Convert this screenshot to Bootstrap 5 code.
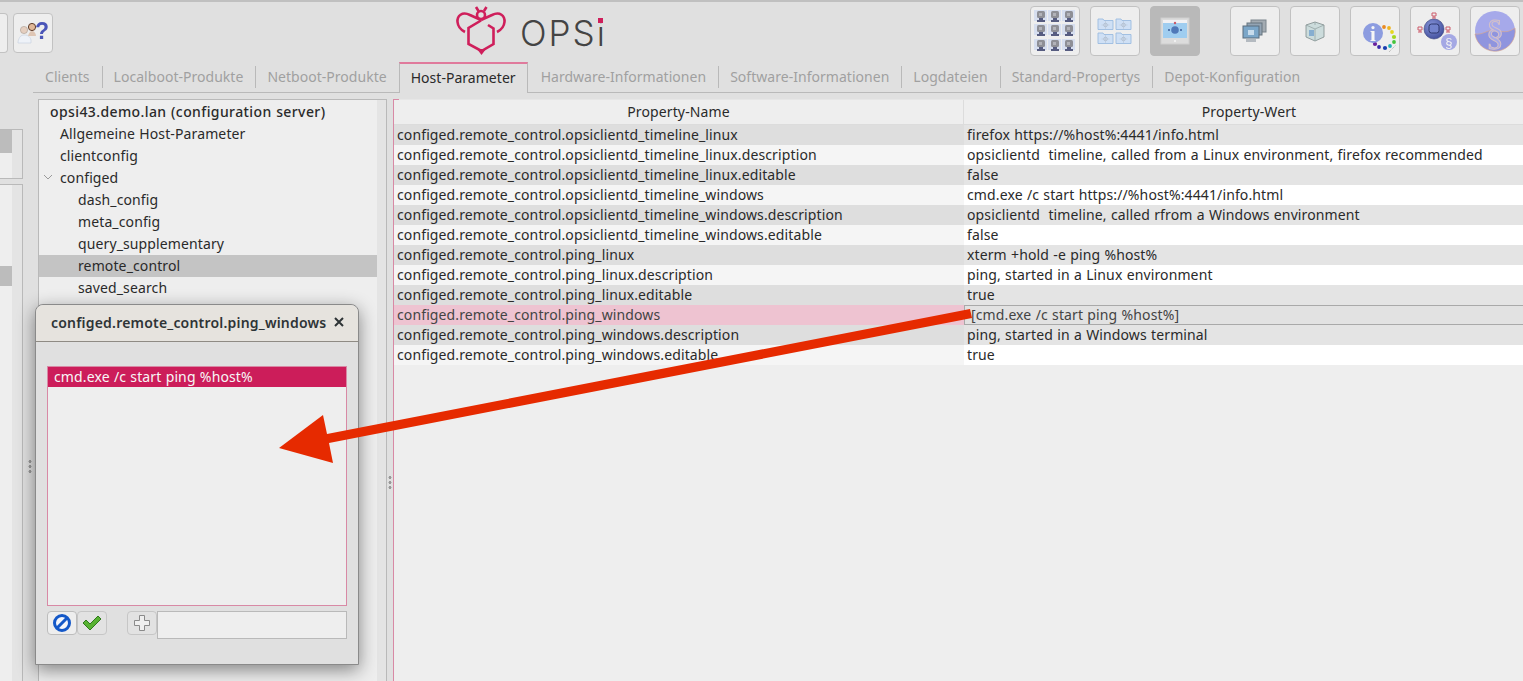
<!DOCTYPE html>
<html lang="de">

<head>
  <meta charset="UTF-8" />
  <title>opsi-configed Host-Parameter</title>
  <link href="https://cdn.jsdelivr.net/npm/bootstrap@5.3.5/dist/css/bootstrap.min.css" rel="stylesheet">
  <style>
    html, body {
      height: 100%;
      overflow: hidden;
    }

    body {
      margin: 0;
      background: #e0e0e0;
      font-family: "Noto Sans", "Open Sans", sans-serif;
      font-size: 14px;
      line-height: 20px;
      letter-spacing: .12px;
      word-spacing: .5px;
      color: #2a2a2a;
    }

    .app-frame {
      position: relative;
      width: 1523px;
      height: 681px;
      border-top: 2px solid #c0c0c0;
      overflow: hidden;
    }

    /* Toolbar */
    .top-bar {
      height: 60px;
      padding-top: 7px;
      position: relative;
    }

    .tool-btn {
      width: 50px;
      height: 50px;
      flex: none;
      background: #eeeeee;
      border: 1px solid #c2c2c2;
      border-radius: 4px;
      display: flex;
      align-items: center;
      justify-content: center;
    }

    .tool-btn svg,
    .help-btn svg {
      filter: blur(.45px);
    }

    .tool-btn.on {
      background: #b9b9b9;
      border-color: #b9b9b9;
    }

    .help-btn {
      width: 40px;
      height: 40px;
      flex: none;
      background: #eeeeee;
      border: 1px solid #c2c2c2;
      border-radius: 4px;
      margin-top: 4px;
      display: flex;
      align-items: center;
      justify-content: center;
    }

    .stub-btn {
      width: 8px;
      height: 40px;
      margin-top: 4px;
      background: #eeeeee;
      border: 1px solid #c2c2c2;
      border-left: 0;
      border-radius: 0 4px 4px 0;
    }

    .left-tools {
      gap: 5px;
    }

    .right-tools {
      position: absolute;
      top: 4px;
      left: 1030px;
      gap: 10px;
    }

    .tool-gap {
      width: 10px;
    }

    .logo-box {
      position: absolute;
      left: 455px;
      top: 2px;
    }

    .logo-word {
      position: absolute;
      left: 65px;
      top: 9px;
      font-family: Inter, "Liberation Sans", sans-serif;
      font-weight: 300;
      font-size: 35px;
      line-height: 40px;
      letter-spacing: 2px;
      color: #444444;
    }

    .logo-word b {
      position: relative;
      font-weight: 300;
    }

    .logo-word b::after {
      content: "";
      position: absolute;
      left: 1.5px;
      top: 6px;
      width: 5px;
      height: 5px;
      background: #cf1f5b;
    }

    /* Tabs */
    .tab-row {
      margin-left: 33px;
      height: 31px;
      border-bottom: 1px solid #b9b9b9;
      display: flex;
      align-items: stretch;
      letter-spacing: .03px;
    }

    .tab-item {
      padding: 5px 12px 0;
      color: #a0a0a0;
      position: relative;
    }

    .tab-item + .tab-item::before {
      content: "";
      position: absolute;
      left: 0;
      top: 4px;
      height: 22px;
      width: 1px;
      background: #b9b9b9;
    }

    .tab-item.active-tab {
      color: #2a2a2a;
      background: #e0e0e0;
      border: 1px solid #b9b9b9;
      border-top: 2px solid #e07a9c;
      border-bottom: 0;
      margin-bottom: -1px;
      margin-right: 1px;
      padding: 4px 11px 0;
    }

    .tab-item.active-tab::before,
    .active-tab + .tab-item::before {
      display: none;
    }

    /* Panes */
    .pane-row {
      height: 590px;
      padding-top: 6px;
      position: relative;
    }

    .far-left {
      width: 38px;
      flex: none;
      position: relative;
    }

    .stub-panel {
      position: absolute;
      left: -1px;
      width: 24px;
      background: linear-gradient(to right, #eeeeee 12px, #e4e4e4 12px);
      border: 1px solid #b9b9b9;
    }

    .stub-one {
      top: 30px;
      height: 50px;
    }

    .stub-one i,
    .stub-two i {
      position: absolute;
      left: 0;
      display: block;
      width: 12px;
      background: #bcbcbc;
    }

    .stub-one i {
      top: 0;
      height: 23px;
    }

    .stub-two {
      top: 85px;
      height: 520px;
    }

    .stub-two i {
      top: 81px;
      height: 20px;
    }

    .tree-pane {
      width: 349px;
      flex: none;
      height: 600px;
      background: linear-gradient(to right, #eeeeee 338px, #e4e4e4 338px);
      border: 1px solid #b9b9b9;
      padding-top: 1px;
    }

    .tree-inner {
      margin-right: 9px;
    }

    .tree-row {
      height: 22px;
      line-height: 21px;
      white-space: nowrap;
    }

    .tree-row.sel {
      background: #c4c4c4;
    }

    .tree-root {
      font-weight: 500;
      letter-spacing: .4px;
    }

    .indent-0 { padding-left: 11px; }
    .indent-1 { padding-left: 21px; position: relative; }
    .indent-2 { padding-left: 39px; }

    .tree-chevron {
      position: absolute;
      left: 4px;
      top: 7px;
    }

    .splitter {
      width: 6px;
      flex: none;
      position: relative;
    }

    .grip {
      position: absolute;
      left: 1px;
      top: 376px;
      width: 4px;
      height: 15px;
      background-image: radial-gradient(circle, #999999 1.4px, transparent 1.6px);
      background-size: 4px 5px;
    }

    .grip.grip-left {
      left: 28px;
      top: 457px;
    }

    .table-pane {
      width: 1141px;
      flex: none;
      height: 600px;
      background: #eeeeee;
      border: 1px solid #b9b9b9;
      border-top: 1px solid #e6e6e6;
      border-left: 1px solid #d889a5;
      position: relative;
    }

    .table-pane::before {
      content: "";
      position: absolute;
      left: -1px;
      top: -1px;
      width: 6px;
      height: 1px;
      background: #d889a5;
    }

    .head-row {
      height: 25px;
      display: flex;
      border-bottom: 1px solid #dcdcdc;
      line-height: 24px;
      text-align: center;
    }

    .head-row div {
      width: 570px;
      flex: none;
    }

    .head-row div:first-child {
      border-right: 1px solid #dcdcdc;
    }

    .prop-name {
      width: 570px;
      flex: none;
      padding-left: 3px;
      white-space: nowrap;
    }

    .prop-val {
      flex: 1;
      padding-left: 3px;
      white-space: nowrap;
    }

    .data-row {
      height: 20px;
      display: flex;
      line-height: 20px;
      background: #ffffff;
    }

    .data-row .prop-name {
      background: #f5f5f5;
    }

    .data-row:nth-child(odd) {
      background: #e4e4e4;
    }

    .data-row:nth-child(odd) .prop-name {
      background: #dedede;
    }

    .data-row.marked .prop-name {
      background: #eec3d1;
      color: #444444;
    }

    .data-row.marked .prop-val {
      background: #e2e2e2;
      outline: 1px solid #a9a9a9;
      outline-offset: -1px;
      padding-left: 7px;
      color: #444444;
    }

    /* Dialog */
    .edit-dialog {
      position: absolute;
      left: 35px;
      top: 302px;
      width: 324px;
      height: 361px;
      background: #e0e0e0;
      border: 1px solid #8a8a8a;
      border-radius: 8px 8px 0 0;
      box-shadow: 0 5px 18px rgba(0, 0, 0, 0.45);
      z-index: 3;
      display: flex;
      flex-direction: column;
    }

    .dialog-title {
      height: 37px;
      flex: none;
      background: #e6e3de;
      border-bottom: 1px solid #8f8b84;
      border-radius: 8px 8px 0 0;
      padding: 8px 14px 0 15px;
      font-weight: 600;
      letter-spacing: .2px;
      color: #2e3436;
    }

    .dialog-body {
      padding: 24px 11px 0;
    }

    .value-list {
      height: 240px;
      background: #eeeeee;
      border: 1px solid #d889a5;
    }

    .value-sel {
      height: 20px;
      background: #cc1d5a;
      color: #f7f7f7;
      padding-left: 6px;
      line-height: 20px;
    }

    .dialog-tools {
      margin-top: 5px;
    }

    .mini-btn {
      width: 30px;
      height: 24px;
      flex: none;
      background: #e2e2e2;
      border: 1px solid #c6c6c6;
      border-radius: 4px;
      display: flex;
      align-items: center;
      justify-content: center;
    }

    .mini-btn.lit {
      background: #eeeeee;
      border-color: #bdbdbd;
    }

    .plus-gap {
      margin-left: 20px;
    }

    .value-input {
      width: 190px;
      height: 28px;
      background: #eeeeee;
      border: 1px solid #b9b9b9;
    }

    .red-arrow {
      position: absolute;
      left: 270px;
      top: 298px;
      z-index: 5;
    }
  </style>
</head>

<body>
  <div class="app-frame">

    <!-- Toolbar -->
    <div class="top-bar d-flex">
      <div class="d-flex left-tools">
        <div class="stub-btn"></div>
        <div class="help-btn">
          <svg width="32" height="30" viewBox="0 0 32 30">
            <circle cx="7" cy="12" r="3.6" fill="#e5cfc0" stroke="#a89a90" stroke-width=".6" />
            <path d="M1 24c1-5 3-7 6-7s6 1 7 5v3H1z" fill="#eef2f8" stroke="#c5cede" stroke-width=".6" />
            <circle cx="15" cy="9" r="3.6" fill="#e0b898" stroke="#5c3a28" stroke-width="1" />
            <path d="M11 18c1-3 2-5 4-5s4 2 4 5z" fill="#dfc6b4" />
            <text x="18" y="21" font-family="Liberation Sans, sans-serif" font-weight="700" font-size="23" fill="#4a55b8">?</text>
          </svg>
        </div>
      </div>

      <div class="logo-box">
        <svg width="54" height="54" viewBox="455 4 54 54">
          <g fill="none" stroke="#cf1f5b" stroke-width="2.6">
            <path d="M481 20 470 15C462 11 457 16 457.5 22 458 27 461 30 465 32" />
            <path d="M481 20 492 15C500 11 505 16 504.5 22 504 27 501 30 497 32" />
            <path d="M488 25 493.5 28.5V44L481.5 51 468.5 44V28L481 20.5" />
            <circle cx="481" cy="15" r="4" />
            <path d="M476 7 478.5 11M486.5 7 484 11" />
          </g>
          <path d="M477 49 481.5 55 486 49z" fill="#cf1f5b" />
        </svg>
        <div class="logo-word">OPS<b>i</b></div>
      </div>

      <div class="right-tools d-flex">
        <div class="tool-btn">
          <svg width="42" height="42" viewBox="0 0 42 42">
            <g id="srv">
              <rect x="0" y="0" width="13" height="11" fill="#d6deef" />
              <rect x="3" y="1" width="8" height="7" rx="1.5" fill="#8e8f96" />
              <rect x="5" y="3" width="3" height="3" fill="#b2b3ba" />
              <path d="M5 8h4v2h2v2H3v-2h2z" fill="#565c80" />
            </g>
            <use href="#srv" x="14" />
            <use href="#srv" x="28" />
            <use href="#srv" y="14" />
            <use href="#srv" x="14" y="14" />
            <use href="#srv" x="28" y="14" />
            <use href="#srv" y="29" />
            <use href="#srv" x="14" y="29" />
            <use href="#srv" x="28" y="29" />
          </svg>
        </div>
        <div class="tool-btn">
          <svg width="36" height="30" viewBox="0 0 36 30">
            <g id="fold">
              <path d="M1 3h5l1 1.500h9v9H1z" fill="#cfe0f5" stroke="#9bbbe0" stroke-width=".9" />
              <circle cx="8.500" cy="9" r="1.800" fill="none" stroke="#a9b4c4" stroke-width=".7" />
              <path d="M4.500 9h8M8.500 5v8" stroke="#b5c0cf" stroke-width=".5" />
            </g>
            <use href="#fold" x="18" />
            <use href="#fold" y="14" />
            <use href="#fold" x="18" y="14" />
          </svg>
        </div>
        <div class="tool-btn on">
          <svg width="30" height="30" viewBox="0 0 30 30">
            <rect x="1" y="2" width="28" height="26" fill="#dcdcdc" stroke="#cfcfcf" />
            <rect x="3" y="4" width="24" height="18" fill="#9fcdf0" />
            <rect x="3" y="4" width="24" height="3" fill="#f1f1f4" />
            <circle cx="15" cy="14" r="3.800" fill="#4f78b8" />
            <circle cx="15" cy="7" r="1.200" fill="#c95a6a" />
            <circle cx="9" cy="14" r="1" fill="#3a5a98" />
            <circle cx="21" cy="14" r="1" fill="#3a5a98" />
            <circle cx="15" cy="25" r="1.100" fill="#f5f5f5" />
          </svg>
        </div>
        <div class="tool-gap"></div>
        <div class="tool-btn">
          <svg width="26" height="24" viewBox="0 0 26 24">
            <rect x="9" y="1" width="15" height="12" fill="#a3abb2" stroke="#7a848c" />
            <rect x="5" y="4" width="15" height="12" fill="#93a4b4" stroke="#66757f" />
            <rect x="1" y="7" width="16" height="12" fill="#7ba6c8" stroke="#5a6c7c" />
            <rect x="6" y="11" width="6" height="5" fill="#c8dcec" />
            <path d="M4 20h10v3H4z" fill="#b4bac0" />
          </svg>
        </div>
        <div class="tool-btn">
          <svg width="22" height="22" viewBox="0 0 22 22">
            <path d="M2 5 11 2l9 3v12l-9 4-9-4z" fill="#ccdcdc" stroke="#7d8c8c" stroke-width=".8" />
            <path d="M2 5l9 4 9-4M11 9v12M11 2v3" fill="none" stroke="#95a5a5" stroke-width=".8" />
            <rect x="5" y="10" width="5" height="6" fill="#86aed0" />
          </svg>
        </div>
        <div class="tool-btn">
          <svg width="40" height="40" viewBox="1351 7 40 40" overflow="visible">
            <g id="ring">
              <circle cx="1380" cy="23" r="1.900" fill="#e98a22" />
              <circle cx="1385" cy="24" r="1.900" fill="#f0b51e" />
              <circle cx="1388" cy="28" r="1.900" fill="#e6d61e" />
              <circle cx="1390" cy="33" r="2.100" fill="#a4d81e" />
              <circle cx="1390" cy="38" r="1.900" fill="#44c43a" />
              <circle cx="1386" cy="42" r="1.900" fill="#22b0b4" />
              <circle cx="1381" cy="44" r="2.100" fill="#1a3fb0" />
              <circle cx="1375" cy="43" r="1.900" fill="#3a2aa8" />
              <circle cx="1371" cy="40" r="2.100" fill="#6a1f9c" />
              <circle cx="1369" cy="35" r="1.900" fill="#521a8c" />
            </g>
            <circle cx="1369" cy="29" r="10" fill="#8c9ce0" />
            <text x="1369" y="37" text-anchor="middle" font-family="Liberation Serif, serif" font-weight="700" font-size="21" fill="#f6f6f6">i</text>
            <path d="M1385 48l7-7" stroke="#9a9a9a" stroke-width=".8" stroke-dasharray="1 1" />
          </svg>
        </div>
        <div class="tool-btn">
          <svg width="44" height="44" viewBox="1410 9 44 44">
            <defs>
              <radialGradient id="ball" cx=".4" cy=".35" r=".7">
                <stop offset="0" stop-color="#8a98dc" />
                <stop offset="1" stop-color="#3f4c9a" />
              </radialGradient>
            </defs>
            <circle cx="1431" cy="29" r="10" fill="url(#ball)" stroke="#39427c" stroke-width=".6" />
            <rect x="1426" y="24" width="10" height="9" rx="2.500" fill="#7282cc" stroke="#2f386e" />
            <circle cx="1446" cy="42" r="8" fill="#a4a8e4" />
            <text x="1446" y="47" text-anchor="middle" font-family="Liberation Sans, sans-serif" font-size="13" fill="#f2f2f2">§</text>
            <g fill="none" stroke="#cc5a6a" stroke-width="1">
              <path d="M1429 13h4v3h-4zM1431 16v2M1429 18h4" />
              <path d="M1415 27h4v3h-4zM1417 30v2M1415 32h4" />
              <path d="M1443 27h4v3h-4zM1445 30v2M1443 32h4" />
            </g>
          </svg>
        </div>
        <div class="tool-btn">
          <svg width="42" height="42" viewBox="0 0 42 42">
            <circle cx="21" cy="21" r="20" fill="#a6a9ea" />
            <path d="M1 24c8 1 12-4 19-4 6 0 11 5 21-2a20 20 0 0 1-40 6z" fill="#8f94de" stroke="#d8a890" stroke-width=".7" />
            <text x="21" y="34" text-anchor="middle" font-family="Liberation Serif, serif" font-size="36" fill="#a6a9ea" stroke="#d4c0c8" stroke-width="1">§</text>
          </svg>
        </div>
      </div>
    </div>

    <!-- Tabs -->
    <div class="tab-row">
      <div class="tab-item">Clients</div>
      <div class="tab-item">Localboot-Produkte</div>
      <div class="tab-item">Netboot-Produkte</div>
      <div class="tab-item active-tab">Host-Parameter</div>
      <div class="tab-item">Hardware-Informationen</div>
      <div class="tab-item">Software-Informationen</div>
      <div class="tab-item">Logdateien</div>
      <div class="tab-item">Standard-Propertys</div>
      <div class="tab-item">Depot-Konfiguration</div>
    </div>

    <!-- Panes -->
    <div class="pane-row d-flex">
      <div class="far-left">
        <div class="stub-panel stub-one"><i></i></div>
        <div class="stub-panel stub-two"><i></i></div>
      </div>

      <div class="tree-pane">
        <div class="tree-inner">
          <div class="tree-row indent-0 tree-root">opsi43.demo.lan (configuration server)</div>
          <div class="tree-row indent-1">Allgemeine Host-Parameter</div>
          <div class="tree-row indent-1">clientconfig</div>
          <div class="tree-row indent-1">
            <svg class="tree-chevron" width="10" height="6" viewBox="0 0 10 6"><path d="M1 1l4 4 4-4" fill="none" stroke="#9a9a9a" /></svg>
            configed
          </div>
          <div class="tree-row indent-2">dash_config</div>
          <div class="tree-row indent-2">meta_config</div>
          <div class="tree-row indent-2">query_supplementary</div>
          <div class="tree-row indent-2 sel">remote_control</div>
          <div class="tree-row indent-2">saved_search</div>
        </div>
      </div>

      <div class="splitter"><span class="grip"></span></div>

      <div class="table-pane">
        <div class="head-row">
          <div>Property-Name</div>
          <div>Property-Wert</div>
        </div>
        <div id="rows"></div>
      </div>
    </div>

    <span class="grip grip-left"></span>

    <!-- Dialog -->
    <div class="edit-dialog">
      <div class="dialog-title d-flex justify-content-between align-items-start">
        <span>configed.remote_control.ping_windows</span>
        <svg class="mt-1" width="10" height="10" viewBox="0 0 10 10"><path d="M1 1l8 8M9 1l-8 8" stroke="#2e3436" stroke-width="2" /></svg>
      </div>
      <div class="dialog-body">
        <div class="value-list">
          <div class="value-sel">cmd.exe /c start ping %host%</div>
        </div>
        <div class="dialog-tools d-flex align-items-start">
          <div class="mini-btn lit">
            <svg width="20" height="20" viewBox="0 0 20 20">
              <circle cx="10" cy="10" r="7.500" fill="#f4f6fb" stroke="#1458c8" stroke-width="3" />
              <path d="M5 15 15 5" stroke="#1458c8" stroke-width="3" />
            </svg>
          </div>
          <div class="mini-btn">
            <svg width="20" height="16" viewBox="0 0 20 16">
              <path d="M1 8l3-3 4 4 8-8 3 3-11 11z" fill="#58b232" stroke="#2f7a1c" />
            </svg>
          </div>
          <div class="mini-btn plus-gap">
            <svg width="18" height="18" viewBox="0 0 18 18">
              <path d="M6.500 1.500h5v5h5v5h-5v5h-5v-5h-5v-5h5z" fill="#efefef" stroke="#8a8a8a" />
            </svg>
          </div>
          <div class="value-input"></div>
        </div>
      </div>
    </div>

    <!-- Annotation arrow -->
    <svg class="red-arrow" width="710" height="170" viewBox="270 300 710 170">
      <path d="M279 448 323 415 327 434 970 309 972 318 329 443 333 463z" fill="#e62a00" />
    </svg>
  </div>

  <script src="https://cdn.jsdelivr.net/npm/bootstrap@5.3.5/dist/js/bootstrap.bundle.min.js"></script>
  <script>
    const pre = 'configed.remote_control.';
    const rows = [
      ['opsiclientd_timeline_linux', 'firefox https://%host%:4441/info.html'],
      ['opsiclientd_timeline_linux.description', 'opsiclientd\u00a0 timeline, called from a Linux environment, firefox recommended'],
      ['opsiclientd_timeline_linux.editable', 'false'],
      ['opsiclientd_timeline_windows', 'cmd.exe /c start https://%host%:4441/info.html'],
      ['opsiclientd_timeline_windows.description', 'opsiclientd\u00a0 timeline, called rfrom a Windows environment'],
      ['opsiclientd_timeline_windows.editable', 'false'],
      ['ping_linux', 'xterm +hold -e ping %host%'],
      ['ping_linux.description', 'ping, started in a Linux environment'],
      ['ping_linux.editable', 'true'],
      ['ping_windows', '[cmd.exe /c start ping %host%]'],
      ['ping_windows.description', 'ping, started in a Windows terminal'],
      ['ping_windows.editable', 'true']
    ];
    const box = document.getElementById('rows');
    rows.forEach(function (r) {
      const row = document.createElement('div');
      row.className = 'data-row' + (r[0] === 'ping_windows' ? ' marked' : '');
      const a = document.createElement('div');
      a.className = 'prop-name';
      a.textContent = pre + r[0];
      const b = document.createElement('div');
      b.className = 'prop-val';
      b.textContent = r[1];
      row.append(a, b);
      box.append(row);
    });
  </script>
</body>

</html>
